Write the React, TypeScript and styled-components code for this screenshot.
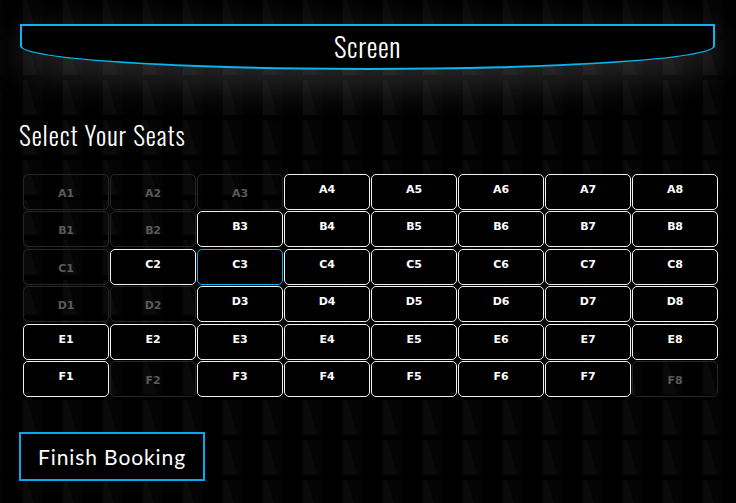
import React from "react";
import styled, { createGlobalStyle } from "styled-components";

const pattern =
  "data:image/svg+xml;utf8," +
  encodeURIComponent(
    `<svg xmlns='http://www.w3.org/2000/svg' width='40' height='40'><rect x='0' y='0' width='20' height='35' fill='#040404'/><polygon points='0,0 4,0 14,35 0,35' fill='#0a0a0a'/></svg>`
  );

const GlobalStyle = createGlobalStyle`
  html, body {
    margin: 0;
    padding: 0;
    background-color: #000;
  }
  body {
    width: 736px;
    height: 503px;
    overflow: hidden;
    background-image: url("${pattern}");
    background-position: 23px 0;
    font-family: "Liberation Sans", sans-serif;
  }
`;

const Page = styled.div`
  display: flex;
  flex-direction: column;
  padding: 24px 20px 0 19px;
  box-sizing: border-box;
  height: 503px;
`;

const ScreenBar = styled.div`
  width: 695px;
  height: 46px;
  margin-left: 1px;
  box-sizing: border-box;
  border: 2px solid #0ab4ee;
  border-radius: 0 0 50% 50% / 0 0 24px 24px;
  background: #000;
  box-shadow: 0 14px 38px rgba(190, 190, 190, 0.24);
  display: flex;
  justify-content: center;
  padding-top: 2px;
`;

const condensed = `"Oswald", "Liberation Sans Narrow", "DejaVu Sans Condensed", sans-serif`;

const ScreenLabel = styled.span`
  font-family: ${condensed};
  font-weight: 300;
  font-size: 27px;
  letter-spacing: 0.6px;
  line-height: 36px;
  color: #fff;
`;

const Heading = styled.h2`
  margin: 49px 0 0 0;
  font-family: ${condensed};
  font-weight: 300;
  font-size: 25.5px;
  letter-spacing: 0.9px;
  line-height: 31px;
  color: #fff;
`;

const Grid = styled.div`
  display: grid;
  grid-template-columns: repeat(8, 86px);
  grid-auto-rows: 36px;
  column-gap: 1px;
  row-gap: 1.4px;
  margin: 24px 0 0 4px;
`;

const Seat = styled.button<{ $taken?: boolean; $active?: boolean }>`
  box-sizing: border-box;
  margin: 0;
  border-radius: 5px;
  border: ${(p) =>
    p.$taken ? "1px solid #262626" : p.$active ? "1.5px solid #0ab4ee" : "1.5px solid #f2f2f2"};
  background: ${(p) => (p.$taken ? "transparent" : "#000")};
  color: ${(p) => (p.$taken ? "#5a5a5a" : "#fff")};
  font-family: "DejaVu Sans", "Liberation Sans", sans-serif;
  font-weight: 700;
  font-size: 11px;
  letter-spacing: -0.2px;
  display: flex;
  align-items: center;
  justify-content: center;
  padding: ${(p) => (p.$taken ? "3px 0 0 0" : "0 0 5px 0")};
  cursor: ${(p) => (p.$taken ? "default" : "pointer")};
`;

const FinishButton = styled.button`
  align-self: flex-start;
  margin-top: 35px;
  width: 186px;
  height: 49px;
  box-sizing: border-box;
  border: 2px solid #0aa6ee;
  background: #000;
  color: #fff;
  font-family: "Lato", "Open Sans", sans-serif;
  font-weight: 400;
  font-size: 21px;
  letter-spacing: 0.9px;
  padding: 0;
  cursor: pointer;
`;

const rows = ["A", "B", "C", "D", "E", "F"];
const taken = new Set(["A1", "A2", "A3", "B1", "B2", "C1", "D1", "D2", "F2", "F8"]);
const active = new Set(["C3"]);

export default function App() {
  return (
    <>
      <GlobalStyle />
      <Page>
        <ScreenBar>
          <ScreenLabel>Screen</ScreenLabel>
        </ScreenBar>
        <Heading>Select Your Seats</Heading>
        <Grid>
          {rows.map((r) =>
            Array.from({ length: 8 }, (_, i) => {
              const id = `${r}${i + 1}`;
              return (
                <Seat key={id} $taken={taken.has(id)} $active={active.has(id)}>
                  {id}
                </Seat>
              );
            })
          )}
        </Grid>
        <FinishButton>Finish Booking</FinishButton>
      </Page>
    </>
  );
}
